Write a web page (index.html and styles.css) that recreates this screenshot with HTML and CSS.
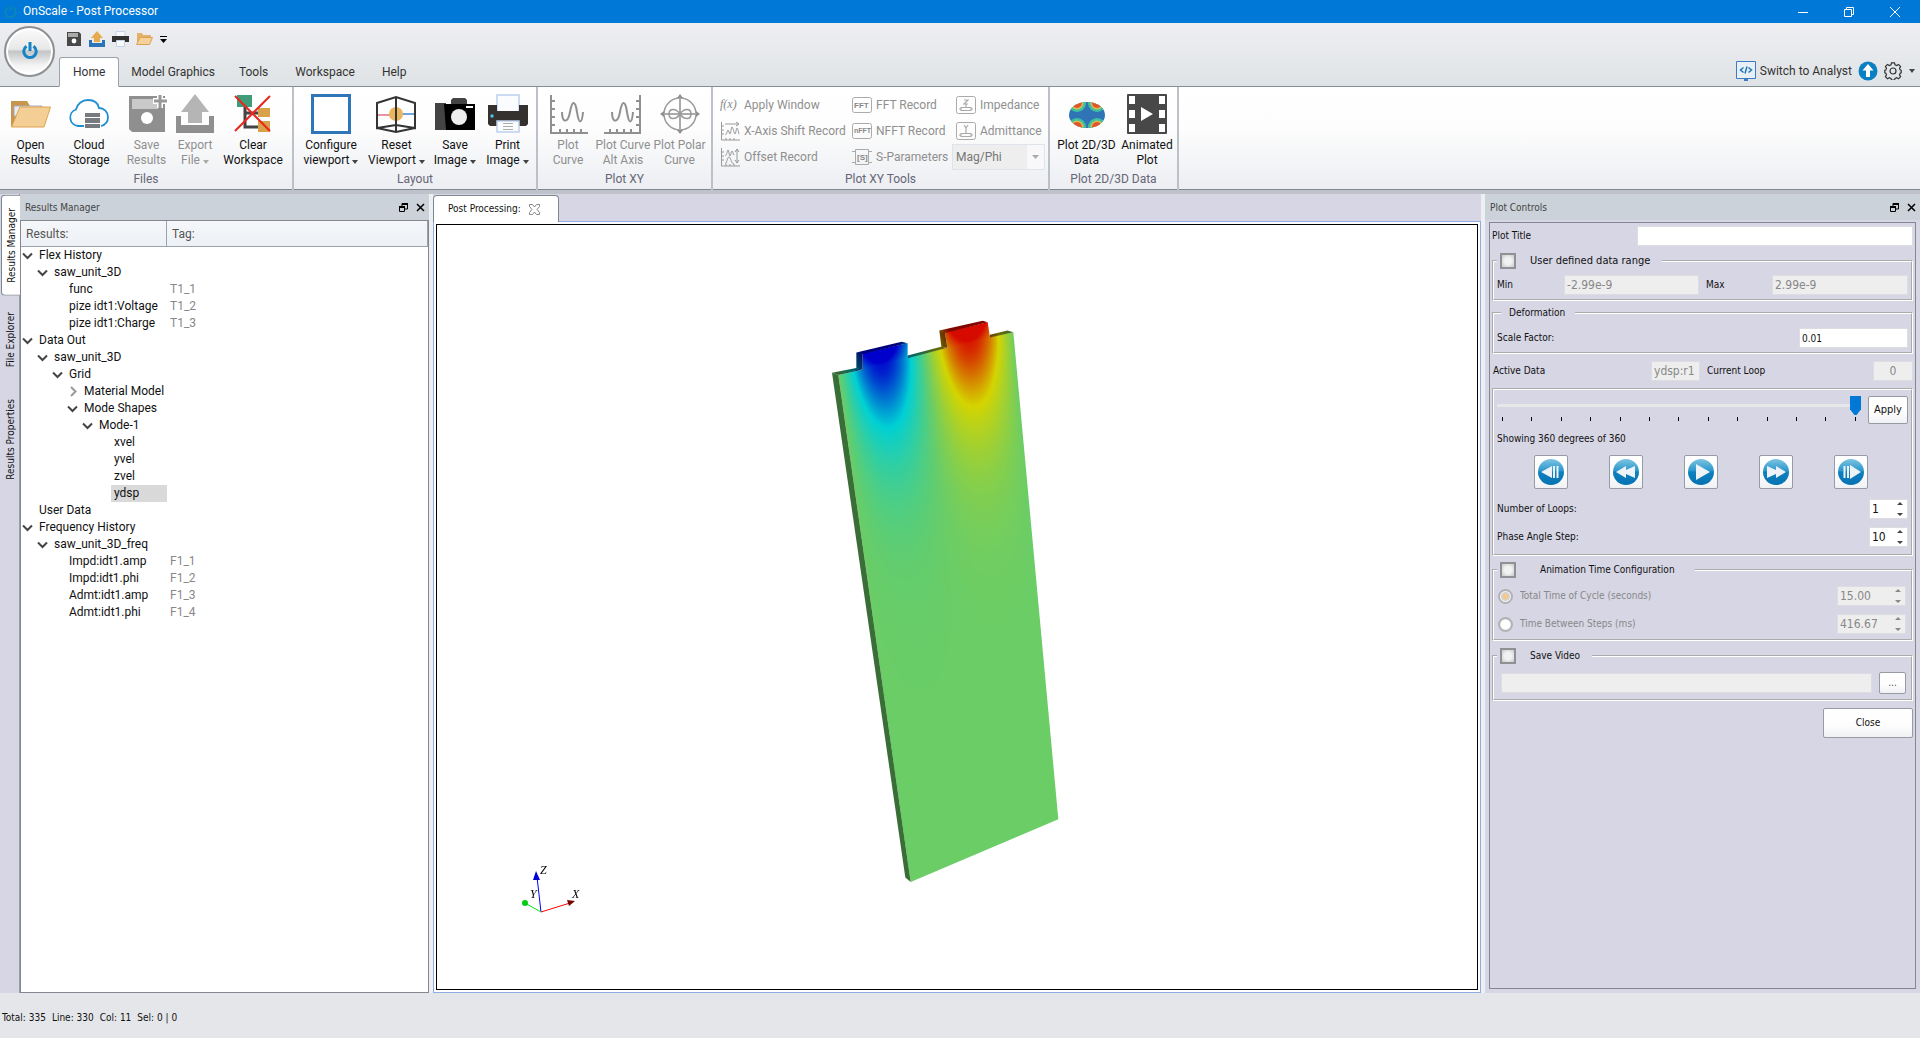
FILE: index.html
```
<!DOCTYPE html>
<html lang="en">
<head>
<meta charset="UTF-8">
<meta name="viewport" content="width=device-width, initial-scale=1.0">
<title>OnScale - Post Processor</title>
<link rel="stylesheet" href="styles.css">
</head>
<body>

<header class="titlebar">
  <svg class="app-icon" width="13" height="13" viewBox="0 0 20 20" fill="none" stroke="#0a86b8" stroke-width="3"><path d="M6 4a8 8 0 1 0 8 0M10 1v8"/></svg>
  <h1>OnScale - Post Processor</h1>
  <div class="window-buttons">
    <button aria-label="Minimize"><svg width="10" height="10" viewBox="0 0 10 10" stroke="#fff" fill="none"><path d="M0 5.5h10"/></svg></button>
    <button aria-label="Restore"><svg width="10" height="10" viewBox="0 0 10 10" stroke="#fff" fill="none"><path d="M.5 2.5h7v7h-7zM2.500 2.500v-2h7v7h-2"/></svg></button>
    <button aria-label="Close"><svg width="10" height="10" viewBox="0 0 10 10" stroke="#fff" fill="none"><path d="M0 0l10 10M10 0L0 10"/></svg></button>
  </div>
</header>

<div class="ribbon-top">
  <button class="orb" aria-label="Application menu">
    <svg width="16" height="18" viewBox="0 0 16 18" fill="none" stroke="#1583c4"><path stroke-width="3" d="M4.500 4.300a6.200 6.200 0 1 0 7 0"/><path stroke-width="3" d="M8 0v9"/></svg>
  </button>
  <div class="top-rows">
    <div class="quick">
      <button aria-label="Save"><svg width="16" height="16" viewBox="0 0 16 16"><path fill="#484848" d="M1 1h12l2 2v12H1z"/><path fill="#aaa" d="M2 2h10v4H2z"/><circle cx="8" cy="10" r="2.400" fill="#fff"/></svg></button>
      <button aria-label="Export"><svg width="16" height="16" viewBox="0 0 16 16"><path fill="#2b74b8" d="M0 9h3v3h10V9h3v7H0z"/><path fill="#e6ab4e" d="M8 0l6 7h-3v4H5V7H2z"/></svg></button>
      <button aria-label="Print"><svg width="17" height="16" viewBox="0 0 17 16"><path fill="#f6f8ff" stroke="#c5d3ea" d="M4 .5h9v5H4z"/><path fill="#333" d="M0 5h17v6H0z"/><path fill="#fafafa" stroke="#c5d3ea" d="M4.500 9.500h8v6h-8z"/></svg></button>
      <button aria-label="Open"><svg width="17" height="14" viewBox="0 0 17 14"><path fill="#e3b168" d="M1 1h5l1 2h8v3H4L1 12z"/><path fill="#f5d29c" stroke="#dca252" d="M4 5.500h12.500l-3 7H.5z"/></svg></button>
      <button aria-label="Customize"><svg width="7" height="7" viewBox="0 0 7 7"><path d="M0 0h7v1H0zM0 3h7L3.500 7z"/></svg></button>
    </div>
    <nav class="tabs">
      <button class="tab active">Home</button>
      <button class="tab">Model Graphics</button>
      <button class="tab">Tools</button>
      <button class="tab">Workspace</button>
      <button class="tab">Help</button>
    </nav>
  </div>
  <div class="top-right">
    <button class="analyst">
      <svg width="20" height="20" viewBox="0 0 20 20"><path fill="#e9eff6" stroke="#3c7cc4" d="M.5.5h19v17H.5z"/><path fill="#3c7cc4" d="M8 17h4v3H8z"/><path fill="none" stroke="#1f76bb" stroke-width="1.500" d="M7.500 6.500L4.500 9l3 2.500M12.500 6.500l3 2.500-3 2.500M11 5.500l-2 7"/></svg>
      Switch to Analyst
    </button>
    <button aria-label="Update"><svg width="20" height="20" viewBox="0 0 20 20"><circle cx="10" cy="10" r="9.500" fill="#0a7fc2"/><path fill="#fff" d="M10 3l5.500 6.500H12V16H8V9.500H4.500z"/></svg></button>
    <button class="gear" aria-label="Settings"><svg width="18" height="18" viewBox="0 0 18 18" fill="none" stroke="#333" stroke-width="1.200"><path d="M7.500.8h3l.5 2 1.700.7 1.800-1.100 2.100 2.100-1.100 1.800.7 1.700 1 .2v2.600l-1 .4-.7 1.700 1.100 1.800-2.100 2.100-1.800-1.100-1.700.7-.5 1.800h-3l-.5-1.800-1.700-.7-1.800 1.100-2.100-2.100 1.100-1.800-.7-1.700-1-.4V8.200l1-.2.7-1.700-1.100-1.800 2.100-2.100 1.800 1.100L7 2.800z"/><circle cx="9" cy="9" r="3"/></svg><span class="caret"></span></button>
  </div>
</div>

<section class="ribbon">
  <div class="group files">
    <div class="tools">
      <button class="big"><svg width="40" height="40" viewBox="0 0 40 40"><path fill="#c8964a" d="M0 7h16l3 5h12v20H0z"/><path fill="#e8ebf3" stroke="#a5adc0" d="M3 12h28v10H3z"/><path fill="#f3cf96" stroke="#dfa34d" d="M9 13h30.500L33 33H.5z"/></svg>Open<br>Results</button>
      <button class="big"><svg width="40" height="40" viewBox="0 0 40 40"><path fill="none" stroke="#1f8fd2" stroke-width="1.800" d="M15 32H9a8.500 8.500 0 0 1-2-16.500C8 10 13 6 19 6s10 3 11 8c5 0 9 4 9 9s-3 8-7 9"/><path fill="#777b80" d="M16 19h15v4H16zM16 24h15v5H16zM16 30h15v4H16z"/></svg>Cloud<br>Storage</button>
      <button class="big" disabled><svg width="40" height="40" viewBox="0 0 40 40"><path fill="#8f8f8f" d="M2 2h36v36H5l-3-3z"/><path fill="#c9c9c9" d="M5 5h26v10H5z"/><circle cx="20" cy="24" r="6" fill="#fff"/><path stroke="#fff" stroke-width="6" d="M33 0v14M26 7h14"/><path stroke="#999" stroke-width="3" d="M33 1v13M27 7h13"/></svg>Save<br>Results</button>
      <button class="big" disabled><svg width="40" height="40" viewBox="0 0 40 40"><path fill="#8f8f8f" d="M1 22h5v9h28v-9h5v17H1z"/><path fill="#b5b5b5" d="M20 0l14 18h-7v11H13V18H6z"/></svg>Export<br>File <span class="caret"></span></button>
      <button class="big"><svg width="40" height="40" viewBox="0 0 40 40"><path fill="none" stroke="#444" stroke-width="3" d="M12 10v23h14M12 19h14"/><path fill="#3f9b78" d="M4 1h15v12H4z"/><path fill="#d9a24a" d="M25 14h12v9H25zM25 27h12v11H25z"/><path stroke="#e8281e" stroke-width="2" d="M2 2l35 35M37 2L2 37"/></svg>Clear<br>Workspace</button>
    </div>
    <div class="group-name">Files</div>
  </div>

  <div class="group layout">
    <div class="tools">
      <button class="big"><svg width="40" height="40" viewBox="0 0 40 40"><path fill="#fff" stroke="#2f76b9" stroke-width="3" d="M1.500 1.500h37v37h-37z"/></svg>Configure<br>viewport <span class="caret"></span></button>
      <button class="big"><svg width="40" height="40" viewBox="0 0 40 40" fill="none"><path stroke="#e07087" stroke-width="1.500" d="M2 21h12"/><path stroke="#3c88cc" stroke-width="1.500" d="M26 20h12"/><circle cx="20" cy="20" r="7" fill="#e9b65c"/><path stroke="#333" stroke-width="2" d="M1 9l19-6 19 6v25l-19-3-19 3zM20 3v34M1 34l19 4 19-4"/></svg>Reset<br>Viewport <span class="caret"></span></button>
      <button class="big"><svg width="40" height="40" viewBox="0 0 40 40"><path fill="#444" d="M16 6l2-2h12l2 2v6H16zM0 9h11v27H0z"/><path d="M9 10h31v26H11z"/><path fill="#fff" d="M31 12h7v2h-7z"/><circle cx="24" cy="23" r="8" fill="#eee"/></svg>Save<br>Image <span class="caret"></span></button>
      <button class="big"><svg width="40" height="40" viewBox="0 0 40 40"><path fill="#fbfcff" stroke="#bcd0ee" stroke-width="1.500" d="M9 1h22v18H9z"/><path fill="#35312f" d="M0 11h9v6h22v-6h9v19l-2 2H2l-2-2z"/><circle cx="4" cy="22" r="1.700" fill="#4fc3e8"/><path fill="#fbfcff" stroke="#bcd0ee" stroke-width="1.500" d="M9 27h22v11H9z"/><path stroke="#aaa" d="M15 29.500h10M15 32.500h10M15 35.500h10"/></svg>Print<br>Image <span class="caret"></span></button>
    </div>
    <div class="group-name">Layout</div>
  </div>

  <div class="group xy">
    <div class="tools">
      <button class="big" disabled><svg width="40" height="40" viewBox="0 0 40 40" fill="none" stroke="#909090" stroke-width="2"><path d="M3 1v38h37M3 7h4M3 15h4M3 23h4M3 31h4M12 39v-4M19 39v-4M26 39v-4M33 39v-4"/><path d="M14 18c0 12 6 11 8 0s5-13 7 0 5 12 6 0"/></svg>Plot<br>Curve</button>
      <button class="big" disabled><svg width="40" height="40" viewBox="0 0 40 40" fill="none" stroke="#909090" stroke-width="2"><path d="M37 1v38H1M37 7h-4M37 15h-4M37 23h-4M37 31h-4M28 39v-4M21 39v-4M14 39v-4M7 39v-4"/><path d="M9 18c0 12 6 11 8 0s5-13 7 0 5 12 6 0"/></svg>Plot Curve<br>Alt Axis</button>
      <button class="big" disabled><svg width="40" height="40" viewBox="0 0 40 40" fill="none" stroke="#999" stroke-width="1.500"><circle cx="20" cy="20" r="16"/><path stroke="#aaa" stroke-width="2" d="M20 1v38M1 20h38"/><path d="M20 20c-4-6-11-6-11 0s7 6 11 0 11-6 11 0-7 6-11 0"/><path fill="#909090" stroke="none" d="M0 20l4-3v6zM40 20l-4-3v6zM20 0l3 4h-6zM20 40l3-4h-6z"/></svg>Plot Polar<br>Curve</button>
    </div>
    <div class="group-name">Plot XY</div>
  </div>

  <div class="group records">
    <div class="tools">
      <button class="small" disabled><svg width="20" height="20" viewBox="0 0 20 20"><text class="fx" x="0" y="13">f(x)</text></svg>Apply Window</button>
      <button class="small" disabled><svg width="20" height="20" viewBox="0 0 20 20"><rect x=".5" y="2.500" width="19" height="15" rx="2" fill="none" stroke="#aaa"/><text class="badge" x="2" y="13">FFT</text></svg>FFT Record</button>
      <button class="small" disabled><svg width="20" height="20" viewBox="0 0 20 20" fill="none" stroke="#aaa"><rect x=".5" y="1.500" width="19" height="17" rx="2"/><path stroke-width="1.200" d="M8 5h4l-4 4h4M10 9.500v3M3 14h2M15 14h2M5 12.500h10v3H5z"/></svg>Impedance</button>
      <button class="small" disabled><svg width="20" height="20" viewBox="0 0 20 20" fill="none" stroke="#999"><path d="M1.500 1v18H20M1 5h3M1 9h3M1 13h3M6 17v2M10 17v2M14 17v2M5 3h14l-3-2M19 3l-3 2"/><path d="M5 13c2 2 2-4 3-4s1 4 2 4 1-7 2-7 2 7 3 7 1-6 2-6 1 3 2 6"/></svg>X-Axis Shift Record</button>
      <button class="small" disabled><svg width="20" height="20" viewBox="0 0 20 20"><rect x=".5" y="2.500" width="19" height="15" rx="2" fill="none" stroke="#aaa"/><text class="badge tiny" x="2" y="12">nFFT</text></svg>NFFT Record</button>
      <button class="small" disabled><svg width="20" height="20" viewBox="0 0 20 20" fill="none" stroke="#aaa"><rect x=".5" y="1.500" width="19" height="17" rx="2"/><path stroke-width="1.200" d="M8 4l2 3 2-3M10 7v5M3 14h2M15 14h2M5 12.500h10v3H5z"/></svg>Admittance</button>
      <button class="small" disabled><svg width="20" height="20" viewBox="0 0 20 20" fill="none" stroke="#999"><path d="M1.500 1v18H20M1 5h3M1 9h3M1 13h3M6 17v2M10 17v2M14 17v2M17 2v14M15 5l2-3 2 3M15 13l2 3 2-3"/><path d="M5 8c2 2 2-5 3-5s1 6 2 6 1-5 2-5 1 3 2 4M5 17c2 0 2-7 4-7s2 7 5 7"/></svg>Offset Record</button>
      <button class="small" disabled><svg width="20" height="20" viewBox="0 0 20 20"><path fill="none" stroke="#aaa" d="M3.500 2.500h13v15h-13zM0 4.500h3M0 15.500h3M17 4.500h3M17 15.500h3"/><text class="badge" x="5" y="13">[S]</text></svg>S-Parameters</button>
      <select disabled aria-label="Display format"><option>Mag/Phi</option></select>
    </div>
    <div class="group-name">Plot XY Tools</div>
  </div>

  <div class="group data">
    <div class="tools">
      <button class="big"><svg width="40" height="40" viewBox="0 0 40 40"><defs><clipPath id="lens"><ellipse cx="20" cy="21" rx="18" ry="13"/></clipPath></defs><g clip-path="url(#lens)"><path fill="#2f74b5" d="M0 0h40v40H0z"/><g fill="#3fc0a0"><circle cx="10" cy="9" r="9"/><circle cx="30" cy="9" r="9"/><circle cx="10" cy="33" r="9"/><circle cx="30" cy="33" r="9"/></g><g fill="#d9c04a"><circle cx="10" cy="9" r="6.500"/><circle cx="30" cy="9" r="6.500"/><circle cx="10" cy="33" r="6.500"/><circle cx="30" cy="33" r="6.500"/></g><g fill="#e2562f"><circle cx="10" cy="9" r="5"/><circle cx="30" cy="9" r="5"/><circle cx="10" cy="33" r="5"/><circle cx="30" cy="33" r="5"/></g></g></svg>Plot 2D/3D<br>Data</button>
      <button class="big"><svg width="40" height="40" viewBox="0 0 40 40"><rect width="40" height="40" rx="1" fill="#484848"/><path fill="#fff" d="M2 2h6v8H2zM2 16h6v8H2zM2 30h6v8H2zM32 2h6v8h-6zM32 16h6v8h-6zM32 30h6v8h-6zM14 13l12 7-12 7z"/></svg>Animated<br>Plot</button>
    </div>
    <div class="group-name">Plot 2D/3D Data</div>
  </div>
</section>

<main class="workspace">
  <nav class="side-tabs">
    <button class="active">Results Manager</button>
    <button>File Explorer</button>
    <button>Results Properties</button>
  </nav>

  <section class="dock results">
    <div class="dock-title">
      <h2>Results Manager</h2>
      <button aria-label="Float"><svg width="9" height="9" viewBox="0 0 9 9" fill="none" stroke="#000"><path d="M.5 3.500h5v5h-5zM3 3V.5h5.500V6H6"/><path stroke-width="2" d="M0 4h6M3 1h6"/></svg></button>
      <button aria-label="Close"><svg width="9" height="9" viewBox="0 0 9 9" stroke="#000" stroke-width="1.500"><path d="M1 1l7 7M8 1L1 8"/></svg></button>
    </div>
    <div class="tree">
      <table>
        <thead><tr><th>Results:</th><th>Tag:</th></tr></thead>
        <tbody>
          <tr class="l1 open"><td>Flex History</td><td></td></tr>
          <tr class="l2 open"><td>saw_unit_3D</td><td></td></tr>
          <tr class="l3"><td>func</td><td>T1_1</td></tr>
          <tr class="l3"><td>pize idt1:Voltage</td><td>T1_2</td></tr>
          <tr class="l3"><td>pize idt1:Charge</td><td>T1_3</td></tr>
          <tr class="l1 open"><td>Data Out</td><td></td></tr>
          <tr class="l2 open"><td>saw_unit_3D</td><td></td></tr>
          <tr class="l3 open"><td>Grid</td><td></td></tr>
          <tr class="l4 closed"><td>Material Model</td><td></td></tr>
          <tr class="l4 open"><td>Mode Shapes</td><td></td></tr>
          <tr class="l5 open"><td>Mode-1</td><td></td></tr>
          <tr class="l6"><td>xvel</td><td></td></tr>
          <tr class="l6"><td>yvel</td><td></td></tr>
          <tr class="l6"><td>zvel</td><td></td></tr>
          <tr class="l6 selected"><td><span>ydsp</span></td><td></td></tr>
          <tr class="l1"><td>User Data</td><td></td></tr>
          <tr class="l1 open"><td>Frequency History</td><td></td></tr>
          <tr class="l2 open"><td>saw_unit_3D_freq</td><td></td></tr>
          <tr class="l3"><td>Impd:idt1.amp</td><td>F1_1</td></tr>
          <tr class="l3"><td>Impd:idt1.phi</td><td>F1_2</td></tr>
          <tr class="l3"><td>Admt:idt1.amp</td><td>F1_3</td></tr>
          <tr class="l3"><td>Admt:idt1.phi</td><td>F1_4</td></tr>
        </tbody>
      </table>
    </div>
  </section>

  <section class="document">
    <div class="doc-tabs">
      <div class="doc-tab">Post Processing:
        <button aria-label="Close tab"><svg width="11" height="11" viewBox="0 0 11 11" fill="none" stroke="#888"><path d="M.5.5h3l2 2.500 2-2.500h3v2L8 5.500l2.500 3v2h-3l-2-2.500-2 2.500h-3v-2L3 5.500.5 2.500z"/></svg></button>
      </div>
    </div>
    <div class="doc-body">
      <div class="viewport">
        <canvas id="model" width="1040" height="764"></canvas>
        <svg class="axes" width="70" height="60" viewBox="0 0 70 60">
          <path stroke="#00f" d="M26 47L22 12"/><path fill="#0000d8" d="M21 6l4 9h-7z"/>
          <path stroke="#f00" d="M26 47L55 38"/><path fill="#7a0000" d="M60 36l-8-1 2 6z"/>
          <path stroke="#0d2" d="M26 47L10 38"/><circle cx="10" cy="38" r="3" fill="#0c1"/>
          <text x="25" y="9">Z</text><text x="15" y="33">Y</text><text x="57" y="33">X</text>
        </svg>
      </div>
    </div>
  </section>

  <section class="dock plot">
    <div class="dock-title">
      <h2>Plot Controls</h2>
      <button aria-label="Float"><svg width="9" height="9" viewBox="0 0 9 9" fill="none" stroke="#000"><path d="M.5 3.500h5v5h-5zM3 3V.5h5.500V6H6"/><path stroke-width="2" d="M0 4h6M3 1h6"/></svg></button>
      <button aria-label="Close"><svg width="9" height="9" viewBox="0 0 9 9" stroke="#000" stroke-width="1.500"><path d="M1 1l7 7M8 1L1 8"/></svg></button>
    </div>
    <form class="controls">
      <div class="row title-row">
        <label for="plotTitle">Plot Title</label>
        <input id="plotTitle" type="text">
      </div>

      <fieldset>
        <legend><label class="ui"><input type="checkbox">User defined data range</label></legend>
        <div class="row range-row">
          <label for="min">Min</label><input id="min" type="text" value="-2.99e-9" disabled>
          <label for="max">Max</label><input id="max" type="text" value="2.99e-9" disabled>
        </div>
      </fieldset>

      <fieldset class="deformation">
        <legend>Deformation</legend>
        <div class="row">
          <label for="scale">Scale Factor:</label><input id="scale" class="push w108 body-font" type="text" value="0.01">
        </div>
      </fieldset>

      <div class="row active-row">
        <label for="active">Active Data</label><input id="active" type="text" value="ydsp:r1" disabled>
        <label for="loop">Current Loop</label><input id="loop" type="text" value="0" disabled>
      </div>

      <div class="box">
        <div class="row slider-row">
          <div class="slider">
            <input type="range" min="0" max="360" step="10" value="360" aria-label="Phase angle">
            <div class="ticks"><i></i><i></i><i></i><i></i><i></i><i></i><i></i><i></i><i></i><i></i><i></i><i></i><i></i></div>
          </div>
          <button type="button" class="btn apply">Apply</button>
        </div>
        <p>Showing 360 degrees of 360</p>
        <div class="player">
          <svg width="0" height="0"><defs><linearGradient id="ball" x2="0" y2="1"><stop offset="0" stop-color="#7ec4e2"/><stop offset=".45" stop-color="#2b97cc"/><stop offset=".5" stop-color="#0f80be"/><stop offset="1" stop-color="#0672b3"/></linearGradient></defs></svg>
          <button type="button" class="btn" aria-label="Step back"><svg width="26" height="26" viewBox="0 0 26 26"><circle cx="13" cy="13" r="13" fill="url(#ball)"/><path fill="#eef3f7" d="M3 13l11-6v12zM15 7h2v12h-2zM18.500 7h2v12h-2z"/></svg></button>
          <button type="button" class="btn" aria-label="Rewind"><svg width="26" height="26" viewBox="0 0 26 26"><circle cx="13" cy="13" r="13" fill="url(#ball)"/><path fill="#eef3f7" d="M3 13l10-6v4l9-4v12l-9-4v4z"/></svg></button>
          <button type="button" class="btn" aria-label="Play"><svg width="26" height="26" viewBox="0 0 26 26"><circle cx="13" cy="13" r="13" fill="url(#ball)"/><path fill="#eef3f7" d="M8 5l14 8-14 8z"/></svg></button>
          <button type="button" class="btn" aria-label="Fast forward"><svg width="26" height="26" viewBox="0 0 26 26"><circle cx="13" cy="13" r="13" fill="url(#ball)"/><path fill="#eef3f7" d="M23 13l-10-6v4L4 7v12l9-4v4z"/></svg></button>
          <button type="button" class="btn" aria-label="Step forward"><svg width="26" height="26" viewBox="0 0 26 26"><circle cx="13" cy="13" r="13" fill="url(#ball)"/><path fill="#eef3f7" d="M23 13L12 6v14zM5.500 7h2v12h-2zM9 7h2v12H9z"/></svg></button>
        </div>
        <div class="row"><label for="loops">Number of Loops:</label><input id="loops" class="push w38" type="number" value="1"></div>
        <div class="row"><label for="step">Phase Angle Step:</label><input id="step" class="push w38" type="number" value="10"></div>
      </div>

      <fieldset class="timing">
        <legend><label class="wide"><input type="checkbox">Animation Time Configuration</label></legend>
        <div class="row"><label class="muted"><input type="radio" name="timing" checked disabled>Total Time of Cycle (seconds)</label><input class="push w68" type="number" value="15.00" aria-label="Total time" disabled></div>
        <div class="row"><label class="muted"><input type="radio" name="timing" disabled>Time Between Steps (ms)</label><input class="push w68" type="number" value="416.67" step="any" aria-label="Step time" disabled></div>
      </fieldset>

      <fieldset class="video">
        <legend><label><input type="checkbox">Save Video</label></legend>
        <div class="row"><input class="grow" type="text" aria-label="Video file" disabled><button type="button" class="btn browse">...</button></div>
      </fieldset>

      <button type="button" class="btn close">Close</button>
    </form>
  </section>
</main>

<footer class="status"><span>Total: 335</span><span>Line: 330</span><span>Col: 11</span><span>Sel: 0 | 0</span></footer>

<script src="model.js"></script>
</body>
</html>
```
FILE: styles.css
```
* {
    box-sizing: border-box;
}
body {
    margin: 0;
    height: 100vh;
    display: flex;
    flex-direction: column;
    overflow: hidden;
    background: #e5e6ea;
    color: #111;
    font-family: Roboto, "Noto Sans", sans-serif;
    font-size: 12px;
    line-height: 15px;
}
button, input, select {
    font: inherit;
    color: inherit;
    margin: 0;
}
button {
    border: none;
    background: none;
    padding: 0;
}
h1, h2, p {
    margin: 0;
    font-size: inherit;
    font-weight: normal;
}
.caret {
    display: inline-block;
    border: 3px solid transparent;
    border-top: 4px solid #444;
    border-bottom: 0;
}

/* title bar */
.titlebar {
    display: flex;
    align-items: center;
    height: 23px;
    padding-left: 4px;
    gap: 6px;
    background: #0078d7;
    color: #fff;
    flex: none;
}
.window-buttons {
    margin-left: auto;
    padding-right: 2px;
    display: flex;
}
.window-buttons button {
    width: 46px;
    height: 20px;
}
.window-buttons svg {
    display: block;
    margin: auto;
}

/* ribbon header */
.ribbon-top {
    display: flex;
    flex: none;
    height: 64px;
    background: linear-gradient(#eeeef1, #dfe3e6);
    border-bottom: 1px solid #848f99;
}
.orb {
    flex: none;
    width: 51px;
    height: 51px;
    margin: 3px 4px 0 4px;
    border: 2px solid #8d8f92;
    border-radius: 50%;
    background: linear-gradient(#fbfbfb, #e8e8e8 45%, #c4c5c7 50%, #f4f4f4 80%, #fff);
    box-shadow: inset 0 0 0 2px #fff;
    padding-top: 2px;
}
.top-rows {
    display: flex;
    flex-direction: column;
    justify-content: space-between;
}
.quick {
    display: flex;
    align-items: center;
    gap: 7px;
    padding: 7px 0 0 7px;
    height: 25px;
}
.quick svg {
    display: block;
}
.tabs {
    display: flex;
    margin-bottom: -1px;
}
.tab {
    height: 30px;
    padding: 1px 13px 0;
    border: 1px solid transparent;
    color: #333;
}
.tab + .tab {
    padding: 1px 11px 0;
}
.tab:nth-child(n+4) {
    margin-left: 3px;
}
.tab.active {
    border-color: #9aa3ab;
    border-bottom-color: #fff;
    border-radius: 3px 3px 0 0;
    background: #fff;
}
.top-right {
    margin-left: auto;
    align-self: flex-end;
    display: flex;
    align-items: center;
    gap: 6px;
    padding: 0 5px 5px 0;
    color: #333;
}
.top-right button {
    display: flex;
    align-items: center;
    gap: 4px;
}
.top-right .gear {
    gap: 7px;
}

/* ribbon body */
.ribbon {
    display: flex;
    flex: none;
    height: 107px;
    background: linear-gradient(#fff, #fdfdfd 40%, #eceef2 99%);
    border-bottom: 4px solid #bfc2cb;
    box-shadow: inset 0 -1px #808790;
}
.group {
    display: flex;
    flex-direction: column;
    padding: 7px 1px 0 1px;
    border-right: 2px solid #bcc1c8;
}
.tools {
    display: grid;
    height: 78px;
    align-content: start;
}
.files .tools { grid-template-columns: 59px 58px 57px 40px 76px; }
.layout .tools { grid-template-columns: 72px 59px 58px 47px; padding-right: 4px; }
.xy .tools { grid-template-columns: 58px 52px 61px; }
.data .tools { grid-template-columns: 71px 50px; padding-right: 4px; }
.big {
    display: block;
    white-space: nowrap;
    text-align: center;
    color: #111;
    justify-self: center;
}
.big svg {
    display: block;
    margin: 0 auto 4px;
}
.big:disabled, .small:disabled {
    color: #8f8f8f;
}
.big:disabled .caret {
    border-top-color: #aaa;
}
.records {
    padding-top: 5px;
}
.records .tools {
    grid-template-columns: 132px 100px 93px;
    grid-auto-rows: 26px;
    height: 80px;
    padding: 0 2px 0 6px;
}
.small {
    display: flex;
    align-items: center;
    gap: 4px;
    white-space: nowrap;
}
.small:nth-child(3n) {
    padding-left: 4px;
}
.small svg {
    flex: none;
}
.records select {
    appearance: none;
    opacity: 1;
    height: 26px;
    border: 1px solid #dfe3ea;
    border-radius: 0;
    padding: 0 3px;
    color: #777;
    background: url("data:image/svg+xml,%3Csvg xmlns='http://www.w3.org/2000/svg' width='17' height='24'%3E%3Cpath fill='%23f8f8fa' d='M0 0h17v24H0z'/%3E%3Cpath fill='%23aaa' d='M5 10h7l-3.5 4z'/%3E%3C/svg%3E") no-repeat right center #eee;
}
.fx {
    font: italic 12px "Liberation Serif", serif;
    fill: #888;
}
.badge {
    font: bold 8px "Liberation Sans", sans-serif;
    fill: #888;
}
.tiny {
    font-size: 7px;
}
.group-name {
    text-align: center;
    color: #667;
}

/* work area */
.workspace {
    display: flex;
    flex: 1;
    min-height: 0;
    background: #d7d6e4;
    font-family: "DejaVu Sans Condensed", "DejaVu Sans", sans-serif;
    font-size: 10px;
    line-height: 14px;
}
.side-tabs {
    flex: none;
    width: 20px;
    padding: 1px 0 0 1px;
    border-right: 1px solid #9a9ea8;
}
.side-tabs button {
    display: block;
    writing-mode: vertical-rl;
    transform: rotate(180deg);
    width: 19px;
    padding: 16px 0;
    line-height: 19px;
    color: #111;
}
.side-tabs .active {
    background: #fff;
    border: 1px solid #7c8792;
    border-left: 0;
    border-radius: 0 4px 4px 0;
    padding: 12px 0;
    line-height: 17px;
}
.dock {
    display: flex;
    flex-direction: column;
    flex: none;
}
.dock-title {
    display: flex;
    align-items: center;
    gap: 8px;
    height: 26px;
    padding: 0 4px 0 5px;
    background: #cbd2da;
    color: #444;
}
.dock-title h2 {
    margin-right: auto;
    padding-top: 1px;
}
.dock-title svg {
    display: block;
}
.results {
    width: 409px;
}
.tree {
    flex: 1;
    background: #fff;
    border: 1px solid #828790;
    font-family: Roboto, "Noto Sans", sans-serif;
    font-size: 12px;
}
.tree table {
    width: 100%;
    border-collapse: separate;
    border-spacing: 0;
    table-layout: fixed;
}
.tree th {
    height: 26px;
    padding: 1px 5px 0;
    text-align: left;
    font-weight: normal;
    color: #555;
    background: linear-gradient(#f5f7fa, #edf1f5);
    border-bottom: 1px solid #9aa3ab;
    border-right: 1px solid #9aa3ab;
}
.tree th:first-child {
    width: 146px;
}
.tree td {
    height: 17px;
    line-height: 17px;
    padding: 0 0 0 3px;
    white-space: nowrap;
}
.tree td:last-child {
    color: #888;
}
.tree .l1 td:first-child { padding-left: 18px; background-position: 1px center; }
.tree .l2 td:first-child { padding-left: 33px; background-position: 16px center; }
.tree .l3 td:first-child { padding-left: 48px; background-position: 31px center; }
.tree .l4 td:first-child { padding-left: 63px; background-position: 46px center; }
.tree .l5 td:first-child { padding-left: 78px; background-position: 61px center; }
.tree .l6 td:first-child { padding-left: 90px; }
.tree .l6 td:first-child { text-indent: 3px; }
.tree .open td:first-child {
    background-repeat: no-repeat;
    background-image: url("data:image/svg+xml,%3Csvg xmlns='http://www.w3.org/2000/svg' width='11' height='8' fill='none' stroke='%23444' stroke-width='2'%3E%3Cpath d='M1 1.5l4.500 4.500L10 1.500'/%3E%3C/svg%3E");
}
.tree .closed td:first-child {
    background-repeat: no-repeat;
    background-image: url("data:image/svg+xml,%3Csvg xmlns='http://www.w3.org/2000/svg' width='11' height='11' fill='none' stroke='%23999' stroke-width='2'%3E%3Cpath d='M4 1l4.500 4.500L4 10'/%3E%3C/svg%3E");
}
.tree .selected span {
    display: block;
    background: #d9d9d9;
}

/* document */
.document {
    flex: 1;
    min-width: 0;
    display: flex;
    flex-direction: column;
    padding: 0 4px;
    background: linear-gradient(90deg, #eeeff3 4px, transparent 4px, transparent calc(100% - 4px), #eeeff3 calc(100% - 4px));
}
.doc-tabs {
    height: 27px;
    padding-top: 1px;
}
.doc-tab {
    display: inline-flex;
    align-items: center;
    gap: 8px;
    height: 27px;
    width: 126px;
    padding: 0 0 0 14px;
    background: #fff;
    border: 1px solid #7c8792;
    border-bottom: 0;
    border-radius: 4px 4px 0 0;
    position: relative;
}
.doc-tab svg {
    display: block;
}
.doc-body {
    flex: 1;
    min-height: 0;
    display: flex;
    background: #fff;
    border: 1px solid #8fade3;
    padding: 2px;
}
.viewport {
    position: relative;
    flex: 1;
    min-width: 0;
    border: 1px solid #000;
}
.viewport canvas {
    display: block;
    width: 100%;
    height: 100%;
    object-fit: contain;
}
.axes {
    position: absolute;
    left: 78px;
    bottom: 64px;
    font: italic 12px "Liberation Serif", serif;
}

/* plot controls */
.plot {
    width: 435px;
}
.controls {
    flex: 1;
    display: flex;
    flex-direction: column;
    gap: 7px;
    margin: 2px 4px 4px;
    padding: 3px 2px 0 2px;
    border: 1px solid #828790;
    color: #111;
}
.row {
    display: flex;
    align-items: center;
}
.push {
    margin-left: auto;
}
input[type=text], input[type=number] {
    height: 20px;
    min-width: 0;
    padding: 0 2px;
    border: 1px solid #dcdce2;
    background-color: #fff;
    color: #111;
    font-size: 12px;
}
input[type=text]:disabled, input[type=number]:disabled {
    background-color: #eee;
    color: #888;
}
input[type=number] {
    appearance: textfield;
    background-image: url("data:image/svg+xml,%3Csvg xmlns='http://www.w3.org/2000/svg' width='6' height='14'%3E%3Cpath fill='%23444' d='M0 3h6L3 0zM0 11h6L3 14z'/%3E%3C/svg%3E");
    background-repeat: no-repeat;
    background-position: right 4px center;
}
input[type=number]:disabled {
    background-image: url("data:image/svg+xml,%3Csvg xmlns='http://www.w3.org/2000/svg' width='6' height='14'%3E%3Cpath fill='%23888' d='M0 3h6L3 0zM0 11h6L3 14z'/%3E%3C/svg%3E");
}
input[type=number]::-webkit-inner-spin-button {
    display: none;
}
.controls .body-font {
    font-size: 10px;
}
.w38 { width: 39px; }
.w68 { width: 69px; }
.w108 { width: 109px; }
.title-row input {
    margin-left: auto;
    width: 276px;
}
fieldset {
    min-width: 0;
    margin: 0;
    padding: 6px 3px 4px;
    border: 2px groove #fff;
}
legend {
    padding: 0 12px 0 3px;
    line-height: 16px;
}
.deformation {
    margin-top: -3px;
    padding-top: 7px;
}
.deformation legend {
    margin-left: 4px;
    padding: 0 10px 0 8px;
}
legend label {
    display: flex;
    align-items: center;
    gap: 14px;
}
legend .wide {
    gap: 24px;
    padding-right: 8px;
}
.ui {
    font-size: 11px;
}
input[type=checkbox] {
    appearance: none;
    width: 16px;
    height: 16px;
    border: 2px solid #8f9194;
    background: radial-gradient(#f2f2f2 40%, #c6c8ca);
}
input[type=radio] {
    appearance: none;
    width: 15px;
    height: 15px;
    border: 2px solid #b0b2b6;
    border-radius: 50%;
    background: radial-gradient(circle, #fff 4px, #dcdde0 6px);
}
input[type=radio]:checked {
    background: radial-gradient(circle, #f3c98e 2px, #d2d2d4 4px, #f4f4f4 5px);
}
.range-row {
    display: grid;
    grid-template-columns: 67px 135px 7px 66px 1fr;
}
.range-row label:nth-of-type(2) {
    grid-column: 4;
}
.active-row {
    display: grid;
    grid-template-columns: 158px 49px 7px 1fr 40px;
    padding-left: 1px;
}
.active-row label:nth-of-type(2) {
    grid-column: 4;
}
#loop {
    text-align: center;
}
.box {
    display: flex;
    flex-direction: column;
    gap: 8px;
    padding: 6px 3px 7px;
    border: 2px groove #fff;
}
.btn {
    border: 1px solid #979ba3;
    border-radius: 2px;
    background: linear-gradient(#fff, #fdfdfd 60%, #f0f1f4);
}
.slider-row {
    gap: 7px;
}
.slider {
    flex: 1;
    height: 28px;
}
.slider input {
    appearance: none;
    display: block;
    width: 100%;
    height: 19px;
    background: linear-gradient(#e7e7ea, #e7e7ea) no-repeat center / 100% 3px;
}
.slider input::-webkit-slider-thumb {
    appearance: none;
    width: 11px;
    height: 19px;
    background: #0078d7;
    clip-path: polygon(0 0, 100% 0, 100% 70%, 60% 100%, 40% 100%, 0 70%);
}
.ticks {
    display: flex;
    justify-content: space-between;
    padding: 2px 5px 0;
}
.ticks i {
    width: 1px;
    height: 4px;
    background: #000;
}
.apply {
    width: 40px;
    height: 28px;
    font-size: 11px;
}
.player {
    display: grid;
    grid-template-columns: repeat(5, 34px);
    justify-content: space-between;
    padding: 1px 40px 2px 37px;
}
.player > svg {
    position: absolute;
}
.player .btn {
    height: 34px;
}
.player .btn svg {
    display: block;
    margin: auto;
}
.timing {
    margin-top: -1px;
    padding: 8px 5px 5px 4px;
}
.timing .row + .row {
    margin-top: 8px;
}
.timing legend {
    margin-left: -1px;
}
.muted {
    display: flex;
    align-items: center;
    gap: 7px;
    color: #888;
}
.video {
    padding: 8px 5px 5px;
}
.video legend {
    margin-left: -2px;
}
.video .row {
    gap: 7px;
    padding-left: 2px;
}
.grow {
    flex: 1;
}
.browse {
    width: 27px;
    height: 22px;
    color: #555;
}
.close {
    align-self: flex-end;
    width: 90px;
    height: 30px;
}

/* status bar */
.status {
    display: flex;
    gap: 6px;
    flex: none;
    height: 45px;
    padding: 18px 2px 0;
    font-family: "DejaVu Sans Condensed", "DejaVu Sans", sans-serif;
    font-size: 10px;
    line-height: 14px;
}
```
FILE: model.js
```
const canvas = document.getElementById('model');
const ctx = canvas.getContext('2d');

// model units per pixel
const SX = 3;
const SY = 2.613;

// colour scale, -1 to 1
const scale = [
    [-1, [0, 0, 205]],
    [-0.5, [0, 208, 212]],
    [0, [106, 205, 102]],
    [0.5, [212, 212, 0]],
    [1, [215, 10, 0]]
];

function colour(v) {
    v = Math.max(-1, Math.min(1, v));
    for (let i = 1; i < scale.length; i++) {
        if (v <= scale[i][0]) {
            const a = scale[i - 1];
            const b = scale[i];
            const t = (v - a[0]) / (b[0] - a[0]);
            return a[1].map((c, k) => Math.round(c + (b[1][k] - c) * t));
        }
    }
}

// displacement: one wavelength across the plate, decaying with depth
function field(x, y) {
    const left = 85 + (y - 196) * 217 / 1325;
    const right = 610 + (y - 84) * 135 / 1273;
    const u = Math.max(0, Math.min(1, (x - left) / (right - left)));
    const depth = y - (196 - 112 * u);
    const decay = depth > 0 ? Math.exp(-Math.pow(depth / 225, 1.35)) : 1 - depth / 150;
    return -Math.sin(2 * Math.PI * u) * 0.96 * decay;
}

function face(points, shade) {
    const px = points.map(p => [p[0] / SX, p[1] / SY]);
    const xs = px.map(p => p[0]);
    const ys = px.map(p => p[1]);
    ctx.save();
    ctx.beginPath();
    px.forEach(p => ctx.lineTo(p[0], p[1]));
    ctx.clip();
    for (let y = Math.floor(Math.min(...ys)); y <= Math.max(...ys); y++) {
        for (let x = Math.floor(Math.min(...xs)); x <= Math.max(...xs); x++) {
            const c = colour(field(x * SX, y * SY)).map(n => Math.round(n * shade));
            ctx.fillStyle = 'rgb(' + c.join(',') + ')';
            ctx.fillRect(x, y, 1, 1);
        }
    }
    ctx.restore();
}

ctx.translate(373, 75);

// plate with the two electrodes
face([[85, 196], [158, 182], [158, 139], [293, 113], [293, 150], [412, 125], [405, 84], [533, 58], [540, 97], [610, 84], [745, 1357], [302, 1521]], 1);
// edges turned away from the light
face([[66, 190], [85, 196], [302, 1521], [286, 1509]], 0.54);
face([[66, 190], [139, 178], [158, 182], [85, 196]], 0.5);
face([[139, 137], [158, 139], [158, 182], [139, 179]], 0.5);
face([[139, 137], [275, 109], [293, 113], [158, 141]], 0.6);
face([[293, 145], [393, 122], [412, 125], [293, 152]], 0.5);
face([[388, 80], [405, 84], [412, 125], [394, 122]], 0.5);
face([[388, 80], [518, 54], [533, 58], [405, 86]], 0.6);
face([[540, 91], [592, 80], [610, 84], [540, 98]], 0.5);
```
